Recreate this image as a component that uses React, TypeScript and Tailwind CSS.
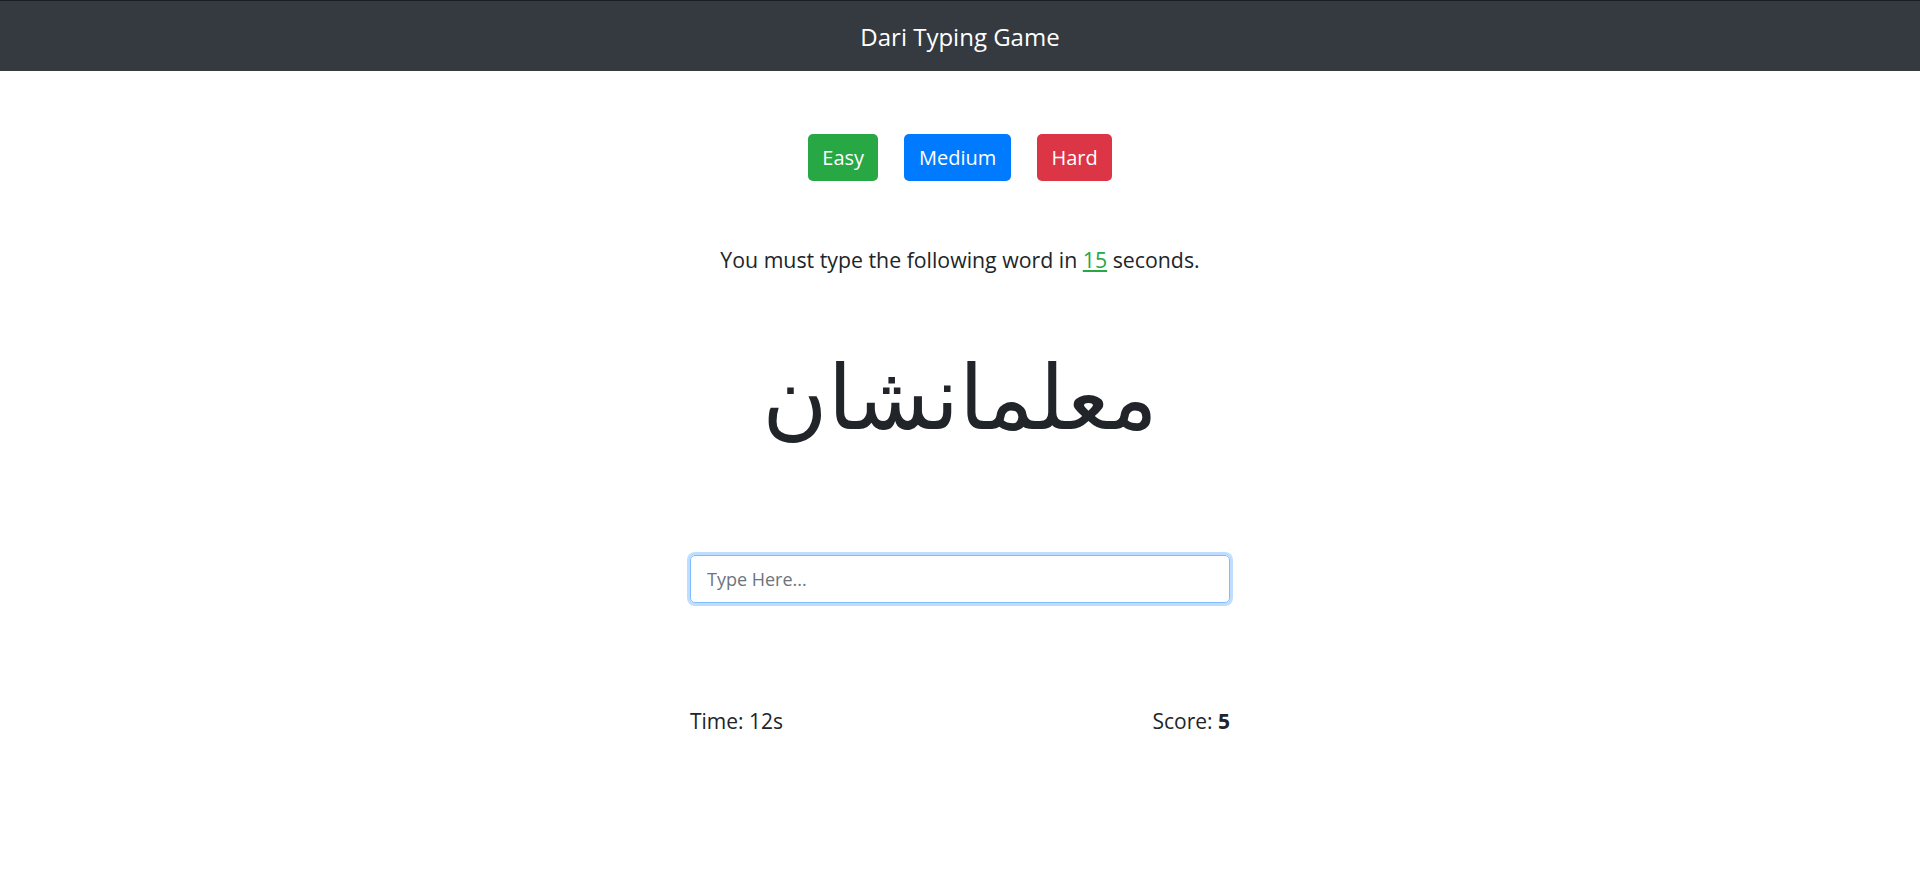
import { useState } from 'react';

const font = { fontFamily: '"Open Sans", "Liberation Sans", sans-serif' };

export default function App() {
  const [text, setText] = useState('');
  const seconds = 15;
  const time = 12;
  const score = 5;

  return (
    <div className="min-h-screen bg-white text-[#212529]" style={font}>
      {/* Navbar */}
      <nav className="h-[71px] bg-[#343a40] border-t border-[#1b1e21] flex items-center justify-center pt-[2px]">
        <span className="text-white text-[24px] leading-none">Dari Typing Game</span>
      </nav>

      <main className="flex flex-col items-center">
        {/* Difficulty buttons */}
        <div className="mt-[63px] flex gap-[26px]">
          <button className="h-[47px] px-[14px] rounded-[5px] bg-[#28a745] text-white text-[20px]">Easy</button>
          <button className="h-[47px] px-[15px] rounded-[5px] bg-[#007bff] text-white text-[20px]">Medium</button>
          <button className="h-[47px] px-[14px] rounded-[5px] bg-[#dc3545] text-white text-[20px]">Hard</button>
        </div>

        <p className="mt-[67px] text-[21.3px] leading-[24px]">
          You must type the following word in{' '}
          <span className="text-[#28a745] underline underline-offset-2">{seconds}</span> seconds.
        </p>

        <h1
          className="mt-[66px] text-[89px] leading-[120px] font-normal"
          dir="rtl"
          style={{ fontFamily: '"DejaVu Sans", sans-serif' }}
        >
          معلمانشان
        </h1>

        <div className="w-[540px] mt-[97px]">
          <input
            value={text}
            onChange={(e) => setText(e.target.value)}
            placeholder="Type Here..."
            className="w-full h-[48px] px-4 text-[18px] rounded-[5px] border border-[#80bdff] shadow-[0_0_0_3px_rgba(0,123,255,0.25)] outline-none placeholder:text-[#6c757d]"
          />

          <div className="mt-[106px] flex justify-between text-[21px] leading-[24px]">
            <span>Time: {time}s</span>
            <span>
              Score: <b className="font-bold">{score}</b>
            </span>
          </div>
        </div>
      </main>
    </div>
  );
}
